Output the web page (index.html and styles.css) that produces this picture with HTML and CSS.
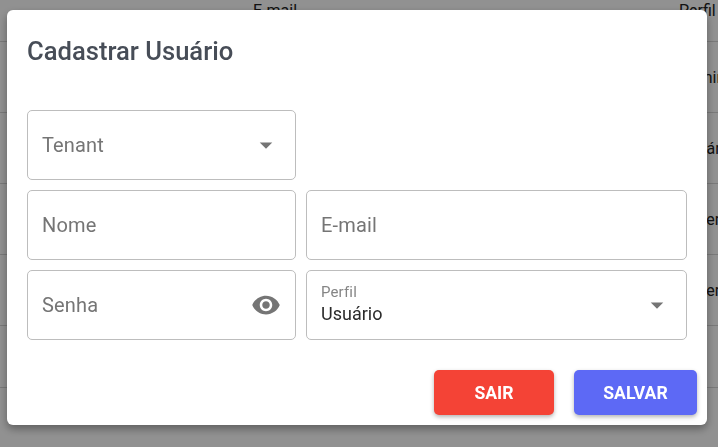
FILE: index.html
```html
<!DOCTYPE html>
<html lang="pt-BR">

<head>
    <meta charset="UTF-8">
    <meta name="viewport" content="width=device-width, initial-scale=1">
    <title>Cadastrar Usuário</title>
    <link rel="stylesheet" href="styles.css">
</head>

<body>

    <!-- Table behind the dialog -->
    <div class="user-table">
        <div class="row row-head">
            <span class="cell-email">E-mail</span>
            <span class="cell-perfil">Perfil</span>
        </div>
        <div class="row"><span class="cell-email"></span><span class="cell-perfil">Admin</span></div>
        <div class="row"><span class="cell-email"></span><span class="cell-perfil">Usuário</span></div>
        <div class="row"><span class="cell-email"></span><span class="cell-perfil">Super</span></div>
        <div class="row"><span class="cell-email"></span><span class="cell-perfil">Super</span></div>
        <div class="row row-last"></div>
    </div>

    <div class="backdrop"></div>

    <div class="dialog">
        <h1 class="dialog-title">Cadastrar Usuário</h1>

        <form class="form-grid">
            <div class="field">
                <span class="placeholder">Tenant</span>
                <svg class="arrow" viewBox="0 0 24 24"><path d="M7 10l5 5 5-5z"/></svg>
            </div>
            <div></div>

            <div class="field">
                <span class="placeholder">Nome</span>
            </div>
            <div class="field">
                <span class="placeholder">E-mail</span>
            </div>

            <div class="field">
                <span class="placeholder">Senha</span>
                <svg class="eye" viewBox="0 0 24 24"><path d="M12 4.5C7 4.5 2.73 7.61 1 12c1.73 4.39 6 7.5 11 7.5s9.27-3.11 11-7.5c-1.73-4.39-6-7.5-11-7.5zM12 17c-2.76 0-5-2.24-5-5s2.24-5 5-5 5 2.24 5 5-2.24 5-5 5zm0-8c-1.66 0-3 1.34-3 3s1.34 3 3 3 3-1.34 3-3-1.34-3-3-3z"/></svg>
            </div>
            <div class="field">
                <div class="value-wrap">
                    <span class="small-label">Perfil</span>
                    <span class="value">Usuário</span>
                </div>
                <svg class="arrow" viewBox="0 0 24 24"><path d="M7 10l5 5 5-5z"/></svg>
            </div>
        </form>

        <div class="actions">
            <button type="button" class="btn btn-sair">Sair</button>
            <button type="button" class="btn btn-salvar">Salvar</button>
        </div>
    </div>

</body>

</html>
```

FILE: styles.css
```css
* {
    box-sizing: border-box;
}

html,
body {
    height: 100%;
}

body {
    margin: 0;
    font-family: Roboto, sans-serif;
    background-color: #fff;
    overflow: hidden;
}

/* table behind */
.user-table {
    height: 447px;
    color: #212121;
    font-size: 16px;
}

.row {
    height: 71px;
    display: flex;
    align-items: center;
    border-bottom: 1px solid #d6d6d6;
}

.row-head {
    height: 42px;
    align-items: flex-start;
    padding-top: 1px;
}

.row-last {
    height: 62px;
}

.cell-email {
    width: 679px;
    flex-shrink: 0;
    padding-left: 253px;
}

.cell-perfil {
    white-space: nowrap;
}

.backdrop {
    position: fixed;
    inset: 0;
    background: rgba(0, 0, 0, 0.43);
}

.dialog {
    position: fixed;
    top: 10px;
    left: 7px;
    width: 700px;
    height: 415px;
    padding: 20px 10px 10px 20px;
    background: #fff;
    border-radius: 6px;
    box-shadow: 0 4px 8px rgba(0, 0, 0, 0.35);
}

.dialog-title {
    margin: 0 0 44px;
    height: 36px;
    font-size: 25.6px;
    line-height: 42px;
    font-weight: 500;
    color: #474d57;
}

.form-grid {
    display: grid;
    grid-template-columns: 269px 381px;
    grid-auto-rows: 70px;
    gap: 10px;
}

.field {
    display: flex;
    align-items: center;
    justify-content: space-between;
    padding: 0 14px;
    border: 1px solid #bdbdbd;
    border-radius: 5px;
}

.placeholder {
    font-size: 20px;
    letter-spacing: 0.15px;
    color: #757575;
}

.arrow {
    width: 30px;
    height: 30px;
    fill: #757575;
}

.eye {
    width: 30px;
    height: 30px;
    fill: #757575;
}

.value-wrap {
    display: flex;
    flex-direction: column;
}

.small-label {
    font-size: 15px;
    line-height: 18px;
    letter-spacing: 0.15px;
    margin-top: -2px;
    margin-bottom: 1px;
    color: #858585;
}

.value {
    font-size: 18px;
    line-height: 24px;
    color: #2b2b2b;
}

.actions {
    display: flex;
    justify-content: flex-end;
    gap: 20px;
    margin-top: 30px;
}

.btn {
    height: 45px;
    border: none;
    border-radius: 5px;
    color: #fff;
    font-family: Roboto, sans-serif;
    font-size: 17.6px;
    font-weight: 700;
    text-transform: uppercase;
    box-shadow: 0 2px 4px rgba(0, 0, 0, 0.3);
    cursor: pointer;
}

.btn-sair {
    width: 120px;
    background-color: #f44336;
}

.btn-salvar {
    width: 123px;
    background-color: #5d69f5;
}
```
